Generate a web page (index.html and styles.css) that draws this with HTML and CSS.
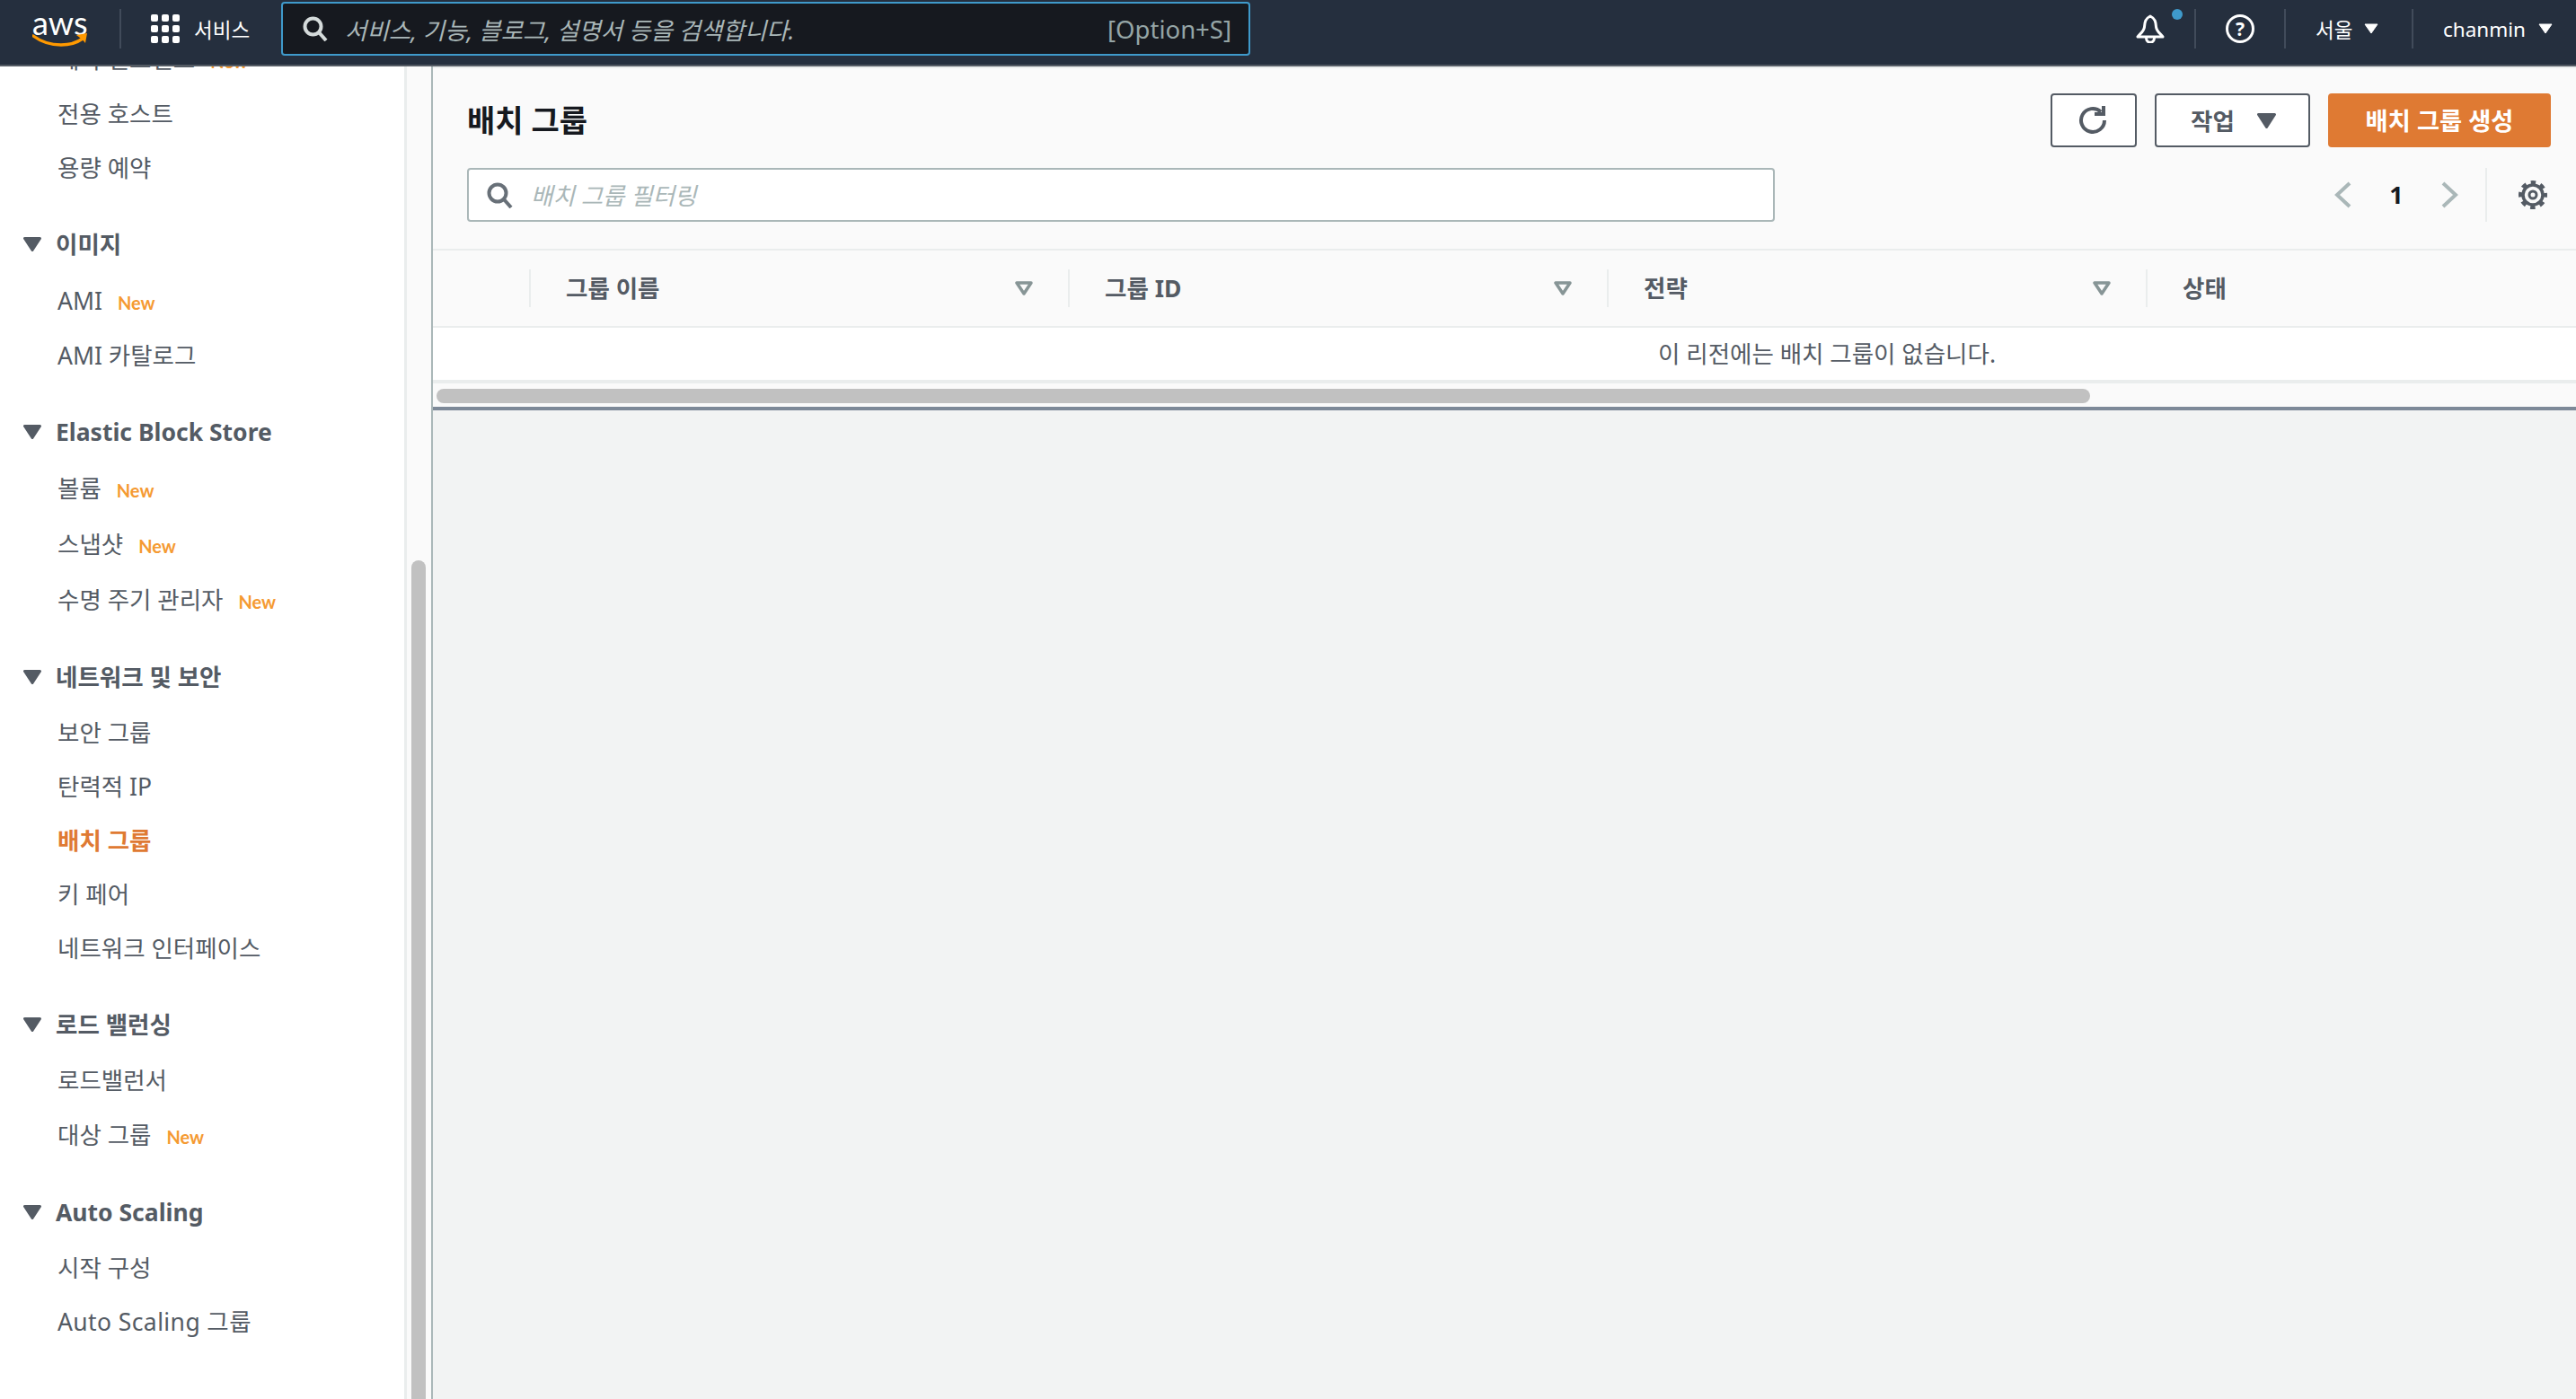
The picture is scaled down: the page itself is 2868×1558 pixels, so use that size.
FILE: index.html
```html
<!DOCTYPE html>
<html lang="ko">
<head>
<meta charset="utf-8">
<title>배치 그룹</title>
<link rel="stylesheet" href="styles.css">
</head>
<body>
<div class="topBar">
	<div class="awsLogo">
		<span class="awsWord">aws</span>
		<svg class="awsSmile" width="62" height="15" viewBox="0 0 62 15"><path d="M1 3C9 9 21 13 32 13C41 13 49 11 56 6" fill="none" stroke="#f90" stroke-width="3.4" stroke-linecap="round"/><path d="M49 2L61 0L59 11C57 8 53 5 49 2Z" fill="#f90"/></svg>
	</div>
	<i class="topLine logoLine"></i>
	<div class="gridIcon"><b></b><b></b><b></b><b></b><b></b><b></b><b></b><b></b><b></b></div>
	<span class="svcText">서비스</span>
	<div class="topSearch">
		<svg class="searchIco" width="28" height="28" viewBox="0 0 28 28"><circle cx="11.5" cy="11.5" r="9" fill="none" stroke="#d5dbdb" stroke-width="4"/><path d="M18 18L26 27" stroke="#d5dbdb" stroke-width="4"/></svg>
		<span class="topHint">서비스, 기능, 블로그, 설명서 등을 검색합니다.</span>
		<span class="topKey">[Option+S]</span>
	</div>
	<div class="topRight">
		<div class="bellBox">
			<svg width="32" height="32" viewBox="0 0 32 32"><path d="M16 2C10 5 10 9 9.500 14C9 19 5 21 2 25H30C27 21 23 19 22.500 14C22 9 22 5 16 2Z" fill="none" stroke="#fff" stroke-width="3" stroke-linejoin="round"/><path d="M11.500 26C11.500 33 20.500 33 20.500 26" fill="none" stroke="#fff" stroke-width="3"/></svg>
			<i class="bellDot"></i>
		</div>
		<i class="topLine bellLine"></i>
		<span class="helpIco">?</span>
		<i class="topLine helpLine"></i>
		<span class="topText regionText">서울</span>
		<svg class="topCaret" width="16" height="12" viewBox="0 0 16 12"><path d="M1 1H15L8 11Z" fill="#fff" stroke="#fff" stroke-linejoin="round"/></svg>
		<i class="topLine regionLine"></i>
		<span class="topText userText">chanmin</span>
		<svg class="topCaret" width="16" height="12" viewBox="0 0 16 12"><path d="M1 1H15L8 11Z" fill="#fff" stroke="#fff" stroke-linejoin="round"/></svg>
	</div>
</div>

<div class="pageBody">
	<div class="sideNav">
		<div class="navList">
			<ul class="navGroup">
				<li class="hasNew">예약 인스턴스<em>New</em></li>
				<li>전용 호스트</li>
				<li>용량 예약</li>
			</ul>
			<ul class="navGroup">
				<li class="tit"><svg width="20" height="16" viewBox="0 0 20 16"><path d="M1.500 1.500H18.500L10 14.500Z" fill="#545b64" stroke="#545b64" stroke-width="3" stroke-linejoin="round"/></svg>이미지</li>
				<li class="hasNew">AMI<em>New</em></li>
				<li>AMI 카탈로그</li>
			</ul>
			<ul class="navGroup">
				<li class="tit"><svg width="20" height="16" viewBox="0 0 20 16"><path d="M1.500 1.500H18.500L10 14.500Z" fill="#545b64" stroke="#545b64" stroke-width="3" stroke-linejoin="round"/></svg>Elastic Block Store</li>
				<li class="hasNew">볼륨<em>New</em></li>
				<li class="hasNew">스냅샷<em>New</em></li>
				<li class="hasNew">수명 주기 관리자<em>New</em></li>
			</ul>
			<ul class="navGroup">
				<li class="tit"><svg width="20" height="16" viewBox="0 0 20 16"><path d="M1.500 1.500H18.500L10 14.500Z" fill="#545b64" stroke="#545b64" stroke-width="3" stroke-linejoin="round"/></svg>네트워크 및 보안</li>
				<li>보안 그룹</li>
				<li>탄력적 IP</li>
				<li class="on">배치 그룹</li>
				<li>키 페어</li>
				<li>네트워크 인터페이스</li>
			</ul>
			<ul class="navGroup">
				<li class="tit"><svg width="20" height="16" viewBox="0 0 20 16"><path d="M1.500 1.500H18.500L10 14.500Z" fill="#545b64" stroke="#545b64" stroke-width="3" stroke-linejoin="round"/></svg>로드 밸런싱</li>
				<li>로드밸런서</li>
				<li class="hasNew">대상 그룹<em>New</em></li>
			</ul>
			<ul class="navGroup">
				<li class="tit"><svg width="20" height="16" viewBox="0 0 20 16"><path d="M1.500 1.500H18.500L10 14.500Z" fill="#545b64" stroke="#545b64" stroke-width="3" stroke-linejoin="round"/></svg>Auto Scaling</li>
				<li>시작 구성</li>
				<li class="wideLat">Auto Scaling 그룹</li>
			</ul>
		</div>
	</div>
	<div class="navTrack"><div class="navThumb"></div></div>

	<div class="mainBox">
		<div class="listHead">
			<div class="headRow">
				<h1>배치 그룹</h1>
				<div class="btnBox">
					<span class="btn btnIco"><svg width="34" height="34" viewBox="0 0 34 34"><path d="M29 17A13 13 0 1 1 25 7.600" fill="none" stroke="#545b64" stroke-width="4"/><path d="M28 1V10H18" fill="none" stroke="#545b64" stroke-width="4"/></svg></span>
					<span class="btn btnAct"><span>작업</span><svg width="21" height="17" viewBox="0 0 21 17"><path d="M1.500 1.500H19.500L10.500 15.500Z" fill="#545b64" stroke="#545b64" stroke-width="3" stroke-linejoin="round"/></svg></span>
					<span class="btn btnNew"><span>배치 그룹 생성</span></span>
				</div>
			</div>
			<div class="filterRow">
				<div class="filterBox">
					<svg width="29" height="29" viewBox="0 0 29 29"><circle cx="12" cy="12" r="9.500" fill="none" stroke="#687078" stroke-width="4"/><path d="M19 19L27 28" stroke="#687078" stroke-width="4"/></svg>
					<span>배치 그룹 필터링</span>
				</div>
				<div class="pager">
					<svg width="19" height="30" viewBox="0 0 19 30"><path d="M17 2L3 15L17 28" fill="none" stroke="#aab7b8" stroke-width="4"/></svg>
					<b>1</b>
					<svg width="19" height="30" viewBox="0 0 19 30"><path d="M2 2L16 15L2 28" fill="none" stroke="#aab7b8" stroke-width="4"/></svg>
				</div>
				<div class="gearBox">
					<svg width="32" height="32" viewBox="0 0 32 32"><circle cx="16" cy="16" r="11" fill="none" stroke="#545b64" stroke-width="3.500"/><circle cx="16" cy="16" r="4" fill="none" stroke="#545b64" stroke-width="3"/><circle cx="16" cy="16" r="14" fill="none" stroke="#545b64" stroke-width="4" stroke-dasharray="5.500 5.500" stroke-dashoffset="2.750"/></svg>
				</div>
			</div>
		</div>
		<div class="tableView">
			<div class="tableIn">
				<div class="tableHead">
					<div></div>
					<div class="th"><span>그룹 이름</span><svg width="20" height="16" viewBox="0 0 20 16"><path d="M2 2H18L10 14Z" fill="none" stroke="#879596" stroke-width="3.500" stroke-linejoin="round"/></svg></div>
					<div class="th"><span>그룹 ID</span><svg width="20" height="16" viewBox="0 0 20 16"><path d="M2 2H18L10 14Z" fill="none" stroke="#879596" stroke-width="3.500" stroke-linejoin="round"/></svg></div>
					<div class="th"><span>전략</span><svg width="20" height="16" viewBox="0 0 20 16"><path d="M2 2H18L10 14Z" fill="none" stroke="#879596" stroke-width="3.500" stroke-linejoin="round"/></svg></div>
					<div class="th"><span>상태</span></div>
				</div>
				<div class="emptyRow">이 리전에는 배치 그룹이 없습니다.</div>
			</div>
		</div>
		<div class="tableScroll"><div class="tableThumb"></div></div>
	</div>
</div>
</body>
</html>
```

FILE: styles.css
```css
*{ padding:0; margin:0; box-sizing:border-box;}

html,body{ height:100%; overflow:hidden;}
body{ font-family:"Noto Sans","Noto Sans CJK KR",sans-serif; font-size:26.5px; color:#545b64; background:#f2f3f3;}
ul{ list-style:none;}
svg{ display:block; flex:none;}

/* top bar */
.topBar{ height:74px; background:#252f3e; border-bottom:2px solid #545b64; display:flex; align-items:center; padding:0 0 8px 36px;}
.awsLogo{ width:62px; height:38px; position:relative;}
.awsWord{ display:block; font-family:"Lato",sans-serif; font-size:36px; line-height:24px; color:#fff;}
.awsSmile{ position:absolute; left:0; top:24px;}
.topLine{ display:block; width:2px; height:44px; background:#414b5a; flex:none;}
.logoLine{ margin-left:35px;}
.gridIcon{ display:grid; grid-template-columns:repeat(3,8px); grid-auto-rows:8px; gap:4px; margin-left:33px;}
.gridIcon b{ background:#fff; border-radius:2px;}
.svcText{ margin-left:16px; width:62px; font-size:22.500px; color:#fff; white-space:nowrap;}
.topSearch{ width:1079px; height:60px; margin-left:35px; background:#16191f; border:2px solid #3f9acb; border-radius:4px; display:flex; align-items:center; padding:0 19px 0 22px;}
.topHint{ margin-left:19px; font-size:26.500px; font-style:italic; color:#aab7b8; white-space:nowrap;}
.topKey{ margin-left:auto; font-size:27.500px; color:#95a5a6;}
.topRight{ margin-left:auto; display:flex; align-items:center; padding-right:26px;}
.bellBox{ position:relative;}
.bellDot{ position:absolute; left:40px; top:-6px; width:12px; height:12px; border-radius:50%; background:#3f9acb;}
.bellLine{ margin-left:33px;}
.helpIco{ width:32px; height:32px; margin-left:33px; border:3px solid #fff; border-radius:50%; color:#fff; font-size:21px; font-weight:700; line-height:26px; text-align:center;}
.helpLine{ margin-left:33px;}
.topText{ color:#fff; font-size:22.500px; white-space:nowrap;}
.regionText{ margin-left:33px; width:54px;}
.regionLine{ margin-left:37px;}
.userText{ margin-left:33px; width:106px;}

/* left nav */
.pageBody{ display:flex; height:1484px;}
.sideNav{ width:453px; height:100%; background:#fff; border-right:3px solid #eaeded; overflow:hidden; flex:none;}
.navList{ margin-top:-39px;}
.navGroup{ margin-bottom:25px;}
.navGroup li{ height:60px; line-height:60px; padding-left:64px; white-space:nowrap;}
.navGroup .hasNew{ height:62px; line-height:62px;}
.navGroup .wideLat{ letter-spacing:0.400px;}
.navGroup .tit{ height:62px; padding-bottom:2px; padding-left:26px; display:flex; align-items:center; font-weight:700;}
.navGroup .tit svg{ margin-right:16px;}
.navGroup .on{ color:#df7a33; font-weight:700;}
.navGroup em{ margin-left:17px; font-family:"Lato",sans-serif; font-size:20px; font-style:normal; font-weight:700; color:#f59a32;}
.navTrack{ width:27px; height:100%; background:#fafafa; padding:550px 0 0 5px; flex:none;}
.navThumb{ width:16px; height:100%; background:#c1c1c1; border-radius:8px 8px 0 0;}

/* main */
.mainBox{ flex:1; min-width:0; border-left:2px solid #aab7b8;}
.listHead{ height:205px; background:#fafafa; border-top:2px solid #eaeded; border-bottom:2px solid #eaeded; padding:28px 28px 0 38px;}
.headRow{ display:flex; align-items:center; justify-content:space-between; height:60px;}
h1{ font-size:34px; font-weight:700; color:#16191f; white-space:nowrap; padding-bottom:3px;}
.btnBox{ display:flex; gap:20px;}
.btn{ height:60px; display:flex; align-items:center; justify-content:center; border-radius:4px; font-weight:700; white-space:nowrap;}
.btn span{ padding-bottom:2px;}
.btnIco,.btnAct{ background:#fff; border:2px solid #545b64;}
.btnIco{ width:96px;}
.btnAct{ width:173px; gap:25px; padding-left:2px;}
.btnNew{ width:248px; background:#df7a33; color:#fff; font-size:27.300px;}
.filterRow{ display:flex; align-items:center; margin-top:23px; height:60px;}
.filterBox{ width:1456px; height:60px; background:#fff; border:2px solid #aab7b8; border-radius:4px; display:flex; align-items:center; padding-left:20px;}
.filterBox span{ margin-left:20px; font-size:26.500px; font-style:italic; color:#aab7b8; padding-bottom:2px;}
.pager{ margin-left:auto; display:flex; align-items:center;}
.pager b{ width:100px; text-align:center; color:#16191f; font-size:27px; padding-bottom:2px;}
.gearBox{ height:60px; margin-left:30px; margin-right:4px; padding-left:35px; border-left:2px solid #eaeded; display:flex; align-items:center;}

.tableView{ overflow:hidden; height:148px; border-bottom:4px solid #eaeded;}
.tableIn{ width:3104px;}
.tableHead{ height:86px; background:#fafafa; border-bottom:2px solid #eaeded; display:grid; grid-template-columns:107px 600px 600px 600px 1197px; align-items:center;}
.th{ height:42px; border-left:2px solid #eaeded; padding:0 39px 0 39px; display:flex; align-items:center; justify-content:space-between; font-weight:700;}
.th span{ padding-bottom:4px;}
.emptyRow{ height:58px; line-height:58px; background:#fff; text-align:center;}
.tableScroll{ height:30px; background:#fafafa; padding:6px 0 0 4px; border-bottom:4px solid; border-image:linear-gradient(#eaeded 50%,#7d8998 50%) 1;}
.tableThumb{ width:1841px; height:16px; background:#c1c1c1; border-radius:8px;}
```
